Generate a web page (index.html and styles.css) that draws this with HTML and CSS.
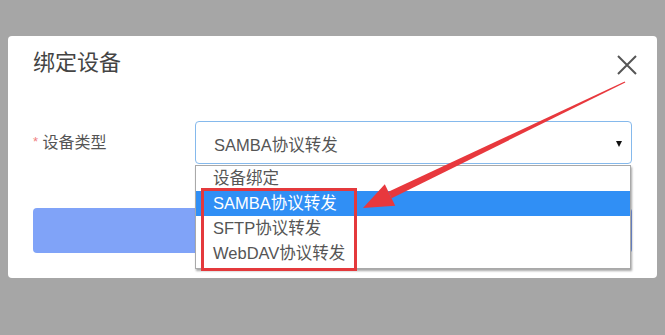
FILE: index.html
```html
<!DOCTYPE html>
<html lang="zh-CN">
<head>
  <meta charset="UTF-8" />
  <title>绑定设备</title>
  <link rel="stylesheet" href="styles.css">
</head>
<body>
  <div class="modal">
    <div class="modal-header">
      <h1>绑定设备</h1>
      <svg class="close-btn" width="20" height="20" viewBox="0 0 20 20">
        <path d="M1 1 L19 19 M19 1 L1 19" stroke="#555" stroke-width="2" fill="none" />
      </svg>
    </div>

    <div class="form-row">
      <label class="form-label"><span class="required">*</span> 设备类型</label>
      <div class="select-wrap">
        <div class="select-box">
          <span>SAMBA协议转发</span>
          <span class="caret"></span>
        </div>
        <ul class="options">
          <li>设备绑定</li>
          <li class="active">SAMBA协议转发</li>
          <li>SFTP协议转发</li>
          <li>WebDAV协议转发</li>
        </ul>
      </div>
    </div>

    <div class="submit-btn"></div>
  </div>

  <!-- annotation overlay -->
  <svg class="annotation" width="665" height="335" viewBox="0 0 665 335">
    <rect x="202.5" y="189.5" width="153" height="80" fill="none" stroke="#e4393c" stroke-width="3" />
    <polygon points="625.3,82.5 624.7,81.5 388.4,191.7 391.6,198.3" fill="#e8383d" />
    <polygon points="363,208 384.8,184.2 395.2,205.8" fill="#e8383d" />
  </svg>
</body>
</html>
```

FILE: styles.css
```css
body {
  margin: 0;
  width: 665px;
  height: 335px;
  background: #a6a6a6;
  font-family: "Liberation Sans", "Noto Sans CJK SC", sans-serif;
  position: relative;
  overflow: hidden;
}
.modal {
  position: absolute;
  left: 8px;
  top: 36px;
  width: 649px;
  height: 242px;
  box-sizing: border-box;
  background: #fff;
  border-radius: 4px;
  padding: 12px 25px 25px 25px;
}
.modal-header {
  display: flex;
  justify-content: space-between;
  align-items: center;
  height: 30px;
}
.modal-header h1 {
  margin: 0;
  font-size: 22px;
  font-weight: normal;
  color: #444;
  line-height: 30px;
}
.close-btn {
  margin-right: -5px;
  margin-top: 3px;
}
.form-row {
  display: flex;
  align-items: center;
  margin-top: 43px;
}
.form-label {
  width: 162px;
  font-size: 16px;
  color: #555;
  margin-top: -4px;
}
.required {
  color: #f08080;
  font-size: 13px;
  vertical-align: 2px;
}
.select-wrap {
  position: relative;
  flex: 1;
}
.select-box {
  height: 43px;
  box-sizing: border-box;
  border: 1px solid #85b9ec;
  border-radius: 4px;
  display: flex;
  align-items: center;
  justify-content: space-between;
  padding: 3px 9px 0 18px;
  font-size: 16.5px;
  color: #555;
}
.caret {
  width: 0;
  height: 0;
  border-left: 3.5px solid transparent;
  border-right: 3.5px solid transparent;
  border-top: 6px solid #111;
}
.options {
  position: absolute;
  top: 44px;
  left: 0;
  right: 1px;
  margin: 0;
  padding: 0 0 2px 0;
  list-style: none;
  background: #fff;
  border: 1px solid #a9a9a9;
  box-shadow: 1px 2px 2px rgba(0, 0, 0, 0.35);
  font-size: 16.5px;
  color: #555;
}
.options li {
  height: 25px;
  line-height: 25px;
  padding-left: 17px;
}
.options li.active {
  background: #308ff5;
  color: #fff;
}
.submit-btn {
  margin-top: 44px;
  height: 45px;
  background: #80a3f8;
  border-radius: 4px;
}
.annotation {
  position: absolute;
  left: 0;
  top: 0;
}
```
